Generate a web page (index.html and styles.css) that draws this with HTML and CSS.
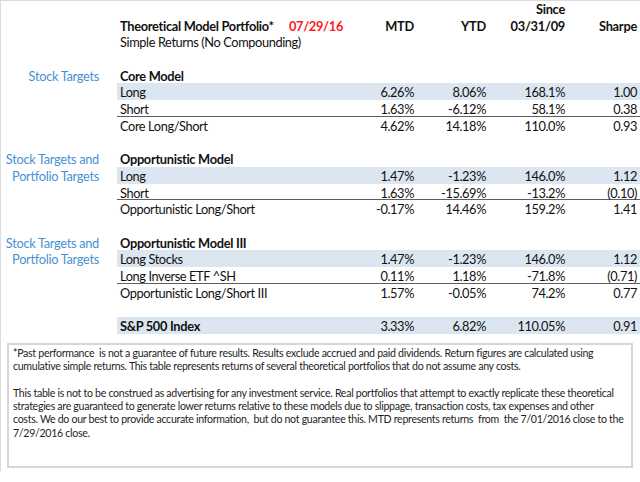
FILE: index.html
```html
<!DOCTYPE html>
<html>
<head>
<meta charset="utf-8">
<link rel="stylesheet" href="styles.css">
</head>
<body>
<div class="frame">
  <div class="sheet">
    <div class="row">
      <div class="side"></div>
      <div class="line head"><span></span><span></span><span></span><span class="num">Since</span><span></span></div>
    </div>
    <div class="row">
      <div class="side"></div>
      <div class="line head"><span class="title"><b>Theoretical Model Portfolio*</b><b class="date">07/29/16</b></span><span class="num">MTD</span><span class="num">YTD</span><span class="num">03/31/09</span><span class="num">Sharpe</span></div>
    </div>
    <div class="row">
      <div class="side"></div>
      <div class="line"><span>Simple Returns (No Compounding)</span></div>
    </div>
    <div class="row gap"></div>

    <div class="row">
      <div class="side">Stock Targets</div>
      <div class="line"><b>Core Model</b></div>
    </div>
    <div class="row">
      <div class="side"></div>
      <div class="line band"><span>Long</span><span class="num">6.26%</span><span class="num">8.06%</span><span class="num">168.1%</span><span class="num">1.00</span></div>
    </div>
    <div class="row">
      <div class="side"></div>
      <div class="line rule"><span>Short</span><span class="num">1.63%</span><span class="num">-6.12%</span><span class="num">58.1%</span><span class="num">0.38</span></div>
    </div>
    <div class="row">
      <div class="side"></div>
      <div class="line"><span>Core Long/Short</span><span class="num">4.62%</span><span class="num">14.18%</span><span class="num">110.0%</span><span class="num">0.93</span></div>
    </div>
    <div class="row gap"></div>

    <div class="row">
      <div class="side">Stock Targets and</div>
      <div class="line"><b>Opportunistic Model</b></div>
    </div>
    <div class="row">
      <div class="side">Portfolio Targets</div>
      <div class="line band"><span>Long</span><span class="num">1.47%</span><span class="num">-1.23%</span><span class="num">146.0%</span><span class="num">1.12</span></div>
    </div>
    <div class="row">
      <div class="side"></div>
      <div class="line rule"><span>Short</span><span class="num">1.63%</span><span class="num">-15.69%</span><span class="num">-13.2%</span><span class="num">(0.10)</span></div>
    </div>
    <div class="row">
      <div class="side"></div>
      <div class="line"><span>Opportunistic Long/Short</span><span class="num">-0.17%</span><span class="num">14.46%</span><span class="num">159.2%</span><span class="num">1.41</span></div>
    </div>
    <div class="row gap"></div>

    <div class="row">
      <div class="side">Stock Targets and</div>
      <div class="line"><b>Opportunistic Model III</b></div>
    </div>
    <div class="row">
      <div class="side">Portfolio Targets</div>
      <div class="line band"><span>Long Stocks</span><span class="num">1.47%</span><span class="num">-1.23%</span><span class="num">146.0%</span><span class="num">1.12</span></div>
    </div>
    <div class="row">
      <div class="side"></div>
      <div class="line rule"><span>Long Inverse ETF ^SH</span><span class="num">0.11%</span><span class="num">1.18%</span><span class="num">-71.8%</span><span class="num">(0.71)</span></div>
    </div>
    <div class="row">
      <div class="side"></div>
      <div class="line"><span>Opportunistic Long/Short III</span><span class="num">1.57%</span><span class="num">-0.05%</span><span class="num">74.2%</span><span class="num">0.77</span></div>
    </div>
    <div class="row gap"></div>

    <div class="row">
      <div class="side"></div>
      <div class="line band"><b>S&amp;P 500 Index</b><span class="num">3.33%</span><span class="num">6.82%</span><span class="num">110.05%</span><span class="num">0.91</span></div>
    </div>
  </div>

  <div class="note">
    <p>*Past performance&nbsp; is not a guarantee of future results. Results exclude accrued and paid dividends. Return figures are calculated using<br>cumulative simple returns. This table represents returns of several theoretical portfolios that do not assume any costs.</p>
    <p>This table is not to be construed as advertising for any investment service. Real portfolios that attempt to exactly replicate these theoretical<br>strategies are guaranteed to generate lower returns relative to these models due to slippage, transaction costs, tax expenses and other<br>costs. We do our best to provide accurate information,&nbsp; but do not guarantee this. MTD represents returns&nbsp; from&nbsp; the 7/01/2016 close to the<br>7/29/2016 close.</p>
  </div>
</div>
</body>
</html>
```

FILE: styles.css
```css
* { box-sizing: border-box; }
html, body { margin: 0; padding: 0; background: #ffffff; }
body {
  font-family: Lato, "Open Sans", "Liberation Sans", sans-serif;
  color: #111111;
}
.frame {
  width: 640px;
  height: 472px;
  border-top: 1px solid #dcdcdc;
  border-left: 1px solid #dcdcdc;
}
.sheet {
  display: flex;
  flex-direction: column;
  font-size: 12.8px;
  letter-spacing: -0.4px;
  margin-top: -1px;
}
.row {
  display: flex;
  height: 16.7px;
  line-height: 18.4px;
}
.side {
  width: 116px;
  flex: none;
  text-align: right;
  padding-right: 18px;
  color: #4a8fd3;
  letter-spacing: -0.3px;
  white-space: nowrap;
}
.line {
  flex: 1;
  display: grid;
  grid-template-columns: 229px 71px 72px 79px 72px;
  height: 16.7px;
  white-space: nowrap;
}
.line > * { padding: 0 3px; }
.line b { font-weight: 700; letter-spacing: -0.3px; }
.num { text-align: right; }
.band { background: #dce6f1; }
.rule { border-bottom: 1px solid #5e5e5e; }
.title {
  display: flex;
  justify-content: space-between;
}
.title b { font-weight: 700; }
.date { color: #ff1a1a; }
.head .num { font-weight: 700; letter-spacing: -0.25px; }
.note {
  margin: 9px 0 0 6px;
  width: 626px;
  height: 125px;
  border: 2px solid #d6d6d6;
  padding: 2px 4px;
  font-size: 10.6px;
  letter-spacing: -0.3px;
  line-height: 13.3px;
  color: #1e1e1e;
  white-space: nowrap;
}
.note p { margin: 0 0 13.3px 0; }
```
